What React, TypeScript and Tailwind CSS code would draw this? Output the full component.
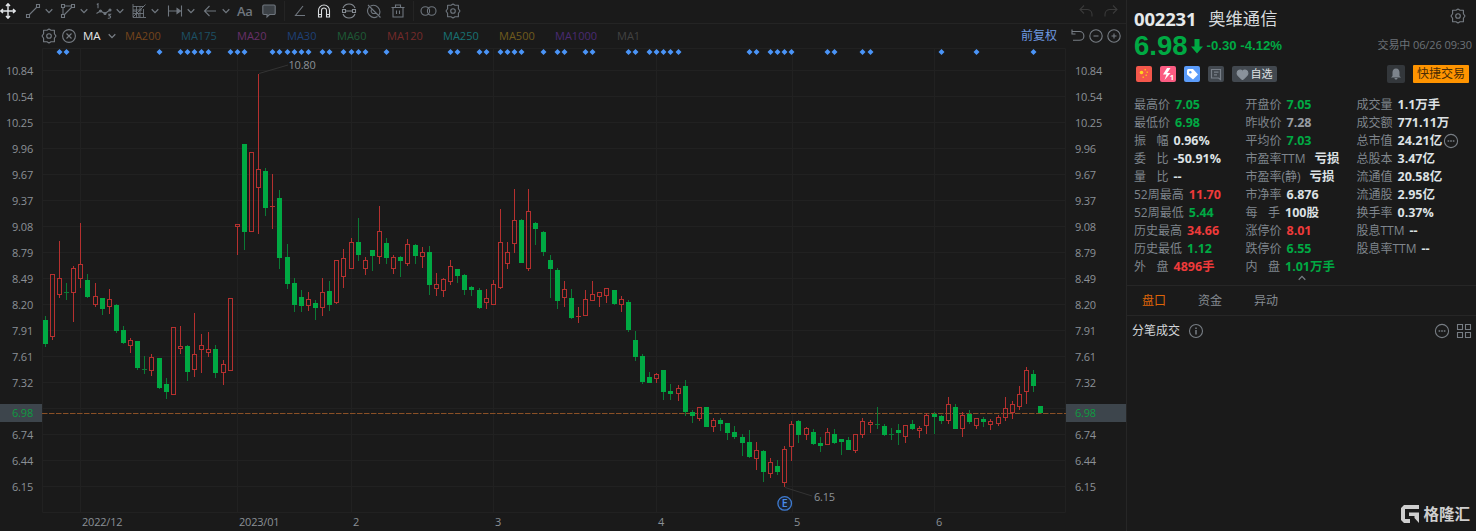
import React from "react";
import { Heart } from "lucide-react";

type Candle = [string, number, number, number, number];

// [direction, body top, body bottom, high, low] in chart pixels
const candles: Candle[] = [
  ["d", 320, 344, 316, 347], ["u", 274, 337, 274, 340], ["u", 278, 295, 241, 298], ["d", 292, 293, 283, 300],
  ["u", 268, 293, 266, 322], ["u", 264, 279, 223, 288], ["d", 280, 297, 274, 298], ["u", 296, 305, 283, 307],
  ["d", 298, 309, 298, 315], ["u", 299, 307, 289, 314], ["d", 305, 331, 304, 333], ["d", 330, 343, 326, 344],
  ["u", 340, 346, 338, 353], ["d", 341, 368, 341, 370], ["d", 369, 370, 356, 374], ["u", 357, 371, 354, 376],
  ["d", 358, 388, 358, 389], ["d", 384, 392, 378, 399], ["u", 327, 395, 327, 395], ["u", 346, 349, 326, 354],
  ["d", 346, 372, 345, 381], ["u", 354, 370, 313, 377], ["u", 345, 350, 334, 373], ["u", 349, 353, 332, 357],
  ["d", 349, 373, 345, 378], ["u", 364, 373, 360, 385], ["u", 298, 371, 298, 371], ["u", 224, 227, 224, 255],
  ["d", 144, 232, 144, 250], ["u", 152, 232, 152, 232], ["u", 169, 188, 74, 234], ["d", 171, 208, 168, 216],
  ["u", 206, 207, 174, 229], ["d", 198, 258, 190, 269], ["d", 257, 284, 244, 289], ["d", 283, 305, 278, 312],
  ["d", 297, 306, 290, 312], ["u", 299, 306, 292, 311], ["d", 303, 308, 300, 320], ["u", 292, 308, 278, 316],
  ["d", 291, 305, 281, 311], ["u", 260, 303, 260, 304], ["u", 258, 277, 249, 288], ["u", 242, 269, 238, 269],
  ["d", 242, 255, 218, 261], ["u", 260, 269, 257, 275], ["d", 250, 256, 250, 271], ["u", 231, 257, 206, 264],
  ["d", 243, 258, 238, 264], ["u", 257, 269, 255, 274], ["d", 257, 261, 256, 277], ["u", 244, 264, 239, 266],
  ["d", 245, 256, 244, 264], ["u", 252, 257, 247, 268], ["d", 252, 285, 246, 295], ["u", 284, 289, 273, 296],
  ["u", 279, 291, 278, 297], ["u", 266, 282, 260, 285], ["d", 269, 276, 269, 283], ["d", 275, 290, 274, 295],
  ["d", 287, 290, 286, 296], ["d", 290, 308, 288, 309], ["u", 298, 303, 289, 309], ["u", 284, 305, 280, 305],
  ["u", 242, 288, 209, 289], ["u", 252, 264, 242, 269], ["u", 220, 244, 189, 253], ["d", 220, 263, 219, 263],
  ["u", 211, 269, 189, 271], ["d", 223, 229, 222, 245], ["d", 232, 252, 231, 256], ["d", 260, 269, 255, 298],
  ["d", 270, 301, 268, 309], ["u", 289, 298, 281, 307], ["d", 298, 318, 289, 319], ["u", 316, 317, 307, 323],
  ["u", 299, 316, 290, 316], ["u", 294, 301, 281, 301], ["u", 292, 297, 292, 307], ["u", 288, 296, 288, 303],
  ["d", 290, 304, 290, 305], ["u", 299, 305, 296, 312], ["d", 302, 330, 300, 332], ["d", 340, 357, 331, 361],
  ["d", 356, 382, 354, 384], ["d", 377, 383, 372, 383], ["u", 374, 379, 373, 383], ["d", 370, 392, 370, 400],
  ["d", 391, 394, 384, 400], ["u", 388, 394, 385, 401], ["d", 386, 412, 380, 416], ["d", 412, 416, 410, 423],
  ["u", 407, 419, 407, 421], ["d", 407, 427, 407, 427], ["u", 420, 427, 418, 432], ["d", 420, 424, 418, 431],
  ["d", 423, 433, 423, 440], ["d", 432, 437, 426, 439], ["d", 437, 443, 434, 456], ["d", 442, 457, 430, 458],
  ["u", 450, 459, 442, 470], ["d", 451, 472, 450, 482], ["u", 462, 474, 458, 478], ["d", 466, 472, 460, 475],
  ["u", 449, 483, 446, 487], ["u", 424, 447, 421, 461], ["d", 421, 435, 420, 443], ["u", 428, 435, 427, 440],
  ["d", 432, 444, 429, 445], ["d", 443, 446, 437, 452], ["u", 432, 445, 428, 445], ["d", 434, 443, 429, 444],
  ["d", 439, 442, 439, 455], ["d", 440, 450, 437, 450], ["u", 434, 451, 434, 453], ["u", 421, 435, 418, 438],
  ["u", 422, 425, 420, 433], ["d", 424, 425, 407, 429], ["d", 426, 435, 424, 436], ["d", 434, 435, 428, 440],
  ["d", 430, 433, 424, 445], ["u", 425, 437, 425, 443], ["d", 424, 429, 420, 430], ["u", 428, 431, 426, 438],
  ["u", 415, 426, 413, 434], ["d", 414, 417, 412, 434], ["d", 416, 421, 415, 424], ["u", 404, 421, 397, 424],
  ["d", 407, 429, 404, 429], ["u", 415, 429, 412, 437], ["d", 414, 422, 410, 424], ["u", 418, 426, 418, 429],
  ["d", 419, 422, 417, 427], ["u", 421, 425, 419, 430], ["u", 417, 424, 415, 426], ["u", 408, 418, 397, 421],
  ["u", 404, 413, 401, 419], ["u", 394, 407, 386, 410], ["u", 370, 392, 367, 404], ["d", 374, 386, 370, 392],
  ["d", 406, 413, 406, 413],
];

// candles that carry an event marker
const events = [
  2, 3, 16, 19, 20, 21, 22, 23, 26, 27, 28, 32, 33, 34, 35, 36, 37, 39, 40, 42, 43, 44, 45, 48, 57, 58, 61, 62, 64,
  65, 66, 67, 70, 72, 73, 76, 77, 82, 83, 85, 86, 87, 88, 89, 99, 100, 102, 103, 104, 105, 110, 111, 115, 116, 126,
  131, 139,
];

const months = [
  { x: 80.5, text: "2022/12" },
  { x: 237.5, text: "2023/01" },
  { x: 351.5, text: "2" },
  { x: 493.5, text: "3" },
  { x: 656.5, text: "4" },
  { x: 792.5, text: "5" },
  { x: 934.5, text: "6" },
];

const prices = [
  "10.84", "10.54", "10.25", "9.96", "9.67", "9.37", "9.08", "8.79", "8.49",
  "8.20", "7.91", "7.61", "7.32", "6.98", "6.74", "6.44", "6.15",
];

const averages = [
  { text: "MA200", cls: "w-9 text-[#74441c]" },
  { text: "MA175", cls: "w-9 text-[#1c5064]" },
  { text: "MA20", cls: "w-[30px] text-[#683069]" },
  { text: "MA30", cls: "w-[30px] text-[#1e4077]" },
  { text: "MA60", cls: "w-[30px] text-[#1e5a37]" },
  { text: "MA120", cls: "w-9 text-[#752a2a]" },
  { text: "MA250", cls: "w-9 text-[#187274]" },
  { text: "MA500", cls: "w-9 text-[#705b1d]" },
  { text: "MA1000", cls: "w-[42px] text-[#4a2b73]" },
  { text: "MA1", cls: "w-6 text-[#424242]" },
];

const UP = "text-[#ef3a3a]";
const DOWN = "text-[#00a943]";
const PLAIN = "text-[#dde1e4]";
const MUTED = "text-[#979ca2]";

type Stat = { label: string; value: string; color: string; gap?: string; more?: boolean };

const stats: Stat[][] = [
  [
    { label: "最高价", value: "7.05", color: DOWN },
    { label: "最低价", value: "6.98", color: DOWN },
    { label: "振幅", value: "0.96%", color: PLAIN },
    { label: "委比", value: "-50.91%", color: PLAIN },
    { label: "量比", value: "--", color: PLAIN },
    { label: "52周最高", value: "11.70", color: UP },
    { label: "52周最低", value: "5.44", color: DOWN },
    { label: "历史最高", value: "34.66", color: UP },
    { label: "历史最低", value: "1.12", color: DOWN },
    { label: "外盘", value: "4896手", color: UP },
  ],
  [
    { label: "开盘价", value: "7.05", color: DOWN },
    { label: "昨收价", value: "7.28", color: MUTED },
    { label: "平均价", value: "7.03", color: DOWN },
    { label: "市盈率TTM", value: "亏损", color: PLAIN, gap: "gap-[9px]" },
    { label: "市盈率(静)", value: "亏损", color: PLAIN, gap: "gap-[9px]" },
    { label: "市净率", value: "6.876", color: PLAIN },
    { label: "每手", value: "100股", color: PLAIN },
    { label: "涨停价", value: "8.01", color: UP },
    { label: "跌停价", value: "6.55", color: DOWN },
    { label: "内盘", value: "1.01万手", color: DOWN },
  ],
  [
    { label: "成交量", value: "1.1万手", color: PLAIN },
    { label: "成交额", value: "771.11万", color: PLAIN },
    { label: "总市值", value: "24.21亿", color: PLAIN, more: true },
    { label: "总股本", value: "3.47亿", color: PLAIN },
    { label: "流通值", value: "20.58亿", color: PLAIN },
    { label: "流通股", value: "2.95亿", color: PLAIN },
    { label: "换手率", value: "0.37%", color: PLAIN },
    { label: "股息TTM", value: "--", color: PLAIN },
    { label: "股息率TTM", value: "--", color: PLAIN },
  ],
];

const Icon = ({ children, className = "" }: { children: React.ReactNode; className?: string }) => (
  <svg viewBox="0 0 16 16" className={`w-4 h-4 shrink-0 ${className}`} fill="none" stroke="currentColor" strokeWidth="1.1">
    {children}
  </svg>
);

const Caret = ({ className = "" }: { className?: string }) => (
  <svg viewBox="0 0 8 8" className={`w-2 h-2 shrink-0 ${className}`} fill="none" stroke="currentColor" strokeWidth="1.3">
    <path d="M.7 2.300 4 5.600l3.300-3.300" />
  </svg>
);

const GearIcon = ({ className = "" }: { className?: string }) => (
  <Icon className={className}>
    <path d="M6 2.2 8 1l2 1.2h3.4v3.5L15 8l-1.6 2.3v3.5H10L8 15l-2-1.2H2.6v-3.5L1 8l1.6-2.3V2.2z" strokeLinejoin="round" />
    <circle cx="8" cy="8" r="2.3" />
  </Icon>
);

const MoreIcon = ({ className = "" }: { className?: string }) => (
  <Icon className={className}>
    <circle cx="8" cy="8" r="6.6" />
    <path d="M4.6 8h1.6M7.2 8h1.6M9.8 8h1.6" strokeWidth="1.5" />
  </Icon>
);

const drawTools = [
  <Icon key="line"><path d="M4.5 11.5l7-7" /><path d="M1.5 11.5h3v3h-3zM11.5 1.5h3v3h-3z" /></Icon>,
  <Icon key="shape">
    <path d="M4.5 3h7M3 4.5v7M4.5 11.5l7-7" />
    <path d="M1.5 1.5h3v3h-3zM11.5 1.5h3v3h-3zM1.5 11.5h3v3h-3z" />
  </Icon>,
  <Icon key="wave">
    <path d="M.5 10.500 4.500 8l4.500 2.500L14 7" />
    <circle cx="4.500" cy="8" r="1" fill="currentColor" />
    <circle cx="9" cy="10.500" r="1" fill="currentColor" />
    <circle cx="14" cy="7" r="1" fill="currentColor" />
    <path d="M.8 1.500 2 .8v4.400M12 11.200h2.500L13 12.800c2.300 0 2 2.500 0 2.500h-1.200" />
  </Icon>,
  <Icon key="gann">
    <path d="M2 1v13.500h13M2 3.500h11M2 7h9M2 10.500h11M5.500 3v11M9 3v11M12.500 6v8M2 14 14.500 1.500M2 8c4 0 6 3 6 6" strokeWidth="0.9" />
  </Icon>,
  <Icon key="measure"><path d="M1.500 2.500v11M14.500 2.500v11M1.500 8h9.500" /><path d="M10 5.500 13.500 8 10 10.500z" fill="currentColor" /></Icon>,
  <Icon key="arrow"><path d="M14 8H2.500M7.500 3l-5 5 5 5" /></Icon>,
];

const Toolbar = () => (
  <div className="flex items-center justify-between h-6 pb-[2px] pr-[7px] border-b border-[#242424] text-[#6f767e]">
    <div className="flex items-center">
      <Icon className="mr-[9px] text-[#e4e7ea]">
        <path d="M8 1v14M1 8h14M6 3l2-2.200L10 3M6 13l2 2.200L10 13M3 6 .8 8 3 10M13 6l2.200 2L13 10" strokeWidth="1.4" />
      </Icon>
      <div className="flex items-center gap-[7.4px]">
        {drawTools.map((tool, i) => (
          <div key={i} className="flex items-center gap-1">
            {tool}
            <Caret />
          </div>
        ))}
      </div>
      <span className="w-[18px] ml-[7px] text-[13px] leading-4 font-semibold tracking-[-0.3px]">Aa</span>
      <Icon className="ml-[6px]">
        <path d="M3 2h10a1.200 1.200 0 0 1 1.200 1.200v7A1.200 1.200 0 0 1 13 11.500H8.500L6 14v-2.500H3a1.200 1.200 0 0 1-1.200-1.200V3.200A1.200 1.200 0 0 1 3 2z" fill="#3c4146" />
      </Icon>
      <span className="w-px h-5 ml-[7px] bg-[#242424]" />
      <Icon className="ml-[7px]"><path d="M11 3 3.500 12.500h9.500" /></Icon>
      <Icon className="ml-2 text-[#d9dcdf]">
        <path d="M2.500 14V7.500a5.500 5.500 0 0 1 11 0V14h-3V7.500a2.500 2.500 0 0 0-5 0V14zM2.500 11.500h3M10.500 11.500h3" />
      </Icon>
      <Icon className="ml-[9px] text-[#858b92]">
        <path d="M2 5a6.500 6.500 0 0 1 12 0M2 11a6.500 6.500 0 0 0 12 0M4.500 8h7" />
        <path d="M1.500 6.500h3v3h-3zM11.500 6.500h3v3h-3z" />
      </Icon>
      <Icon className="ml-[9px]">
        <path d="M4.500 3A6.500 6.500 0 0 1 13 12M11.500 13.500A6.500 6.500 0 0 1 3 4M2 2l12.500 12.500M6 6.200a2.500 2.500 0 0 0 3.600 3.600" />
      </Icon>
      <Icon className="ml-2">
        <path d="M1.500 4.500h13M5.500 4.200V2h5v2.200M3 4.500V14h10V4.500M6.500 7.500v3.500M9.500 7.500v3.500" />
      </Icon>
      <span className="w-px h-5 ml-[7px] bg-[#242424]" />
      <Icon className="ml-[6px] w-[17px]"><circle cx="4.800" cy="8" r="4.300" /><circle cx="11.200" cy="8" r="4.300" /></Icon>
      <GearIcon className="ml-2" />
    </div>
    <div className="flex gap-[9px] text-[#3a3a3a]">
      <Icon><path d="M6 2.500 2 6.500l4 4M2 6.500h7.500a5 5 0 0 1 4.500 5v2" /></Icon>
      <Icon><path d="m10 2.500 4 4-4 4M14 6.500H6.500a5 5 0 0 0-4.500 5v2" /></Icon>
    </div>
  </div>
);

const AverageBar = () => (
  <div className="flex items-center h-6 pl-[41px] pr-1 text-[11px] text-[#777d84]">
    <GearIcon />
    <Icon className="ml-1"><circle cx="8" cy="8" r="6.400" /><path d="m5.500 5.500 5 5M10.500 5.500l-5 5" /></Icon>
    <span className="w-[18px] ml-[6px] text-[11.500px] font-medium text-[#e6e6e6]">MA</span>
    <Caret className="ml-[7px] mr-[9px]" />
    <div className="flex gap-5">
      {averages.map((item) => (
        <span key={item.text} className={`whitespace-nowrap ${item.cls}`}>{item.text}</span>
      ))}
    </div>
    <span className="ml-auto mr-[13px] text-[12px] text-[#6f9ae3]">前复权</span>
    <Icon className="mr-[2px]"><path d="M2 3.500h7.500a4.300 4.300 0 0 1 0 8.800H3M5.500 6H2V1.500" /></Icon>
    <Icon className="mr-[2px]"><circle cx="8" cy="8" r="6.200" /><path d="M5.500 8h5" /></Icon>
    <Icon><circle cx="8" cy="8" r="6.200" /><path d="M5.500 8h5M8 5.500v5" /></Icon>
  </div>
);

const PriceAxis = ({ side }: { side: "left" | "right" }) => (
  <div className={`flex flex-col shrink-0 pt-[10px] text-[11px] tracking-[-0.2px] text-[#8b9096] ${side === "left" ? "w-[42px]" : "w-[60px]"}`}>
    {prices.map((price) => {
      const current = price === "6.98";
      return (
        <div
          key={price}
          className={`flex items-center ${side === "left" ? "justify-end pr-[9px]" : "pl-[9px]"} ${current ? "h-[18px] mt-2 bg-[#3d454c] text-[#0f9a41]" : "h-[26px]"}`}
        >
          {price}
        </div>
      );
    })}
  </div>
);

const Chart = () => (
  <svg viewBox="42 48 1024 483" className="w-[1024px] h-[483px] shrink-0">
    <g stroke="#212121" strokeWidth="1">
      {prices.map((price, i) => (
        <path key={price} d={`M42 ${70.5 + i * 26}H1066`} />
      ))}
      {months.map((m) => (
        <path key={m.x} d={`M${m.x} 48V512`} />
      ))}
      <path d="M42.5 48.5H1065.5V512.5H42.5z" fill="none" />
    </g>
    {events.map((i) => {
      const x = Math.floor(45.3 + i * 7.11) + 0.5;
      return <path key={i} d={`M${x} 49l3 3-3 3-3-3z`} fill="#4a94f7" />;
    })}
    <path d="M42 413.5H1066" stroke="#8a5026" strokeDasharray="5.5 1.5" />
    {candles.map(([dir, top, bottom, high, low], i) => {
      const x = Math.floor(45.3 + i * 7.11);
      const flat = bottom - top < 2;
      if (dir === "d") {
        return (
          <g key={i}>
            <rect x={x} y={high} width="1" height={low - high} fill="#0b7a35" />
            <rect x={x - 2} y={top} width="5" height={bottom - top} fill={flat ? "#0b7a35" : "#00a943"} />
          </g>
        );
      }
      return (
        <g key={i}>
          <path d={`M${x + 0.5} ${high}V${top}M${x + 0.5} ${bottom}V${low}`} stroke="#b5302f" />
          {flat ? (
            <rect x={x - 2} y={top} width="5" height="1" fill="#b5302f" />
          ) : (
            <rect x={x - 1.5} y={top + 0.5} width="4" height={bottom - top - 1} fill="none" stroke="#b5302f" />
          )}
        </g>
      );
    })}
    <path d="M259 73.5 288 65M785 487.5 812 496" stroke="#333333" fill="none" />
    <g fill="#8b9096" fontSize="11" letterSpacing="-0.2">
      <text x="288.5" y="68.5">10.80</text>
      <text x="814" y="500.5">6.15</text>
      {months.map((m) => (
        <text key={m.text} x={m.x + 1.5} y="526">{m.text}</text>
      ))}
    </g>
    <circle cx="784.7" cy="503.4" r="6.8" fill="#1a2330" stroke="#3f7bd0" strokeWidth="1.3" />
    <text x="784.7" y="507.2" fill="#4a8ceb" fontSize="10.5" fontWeight="600" textAnchor="middle">E</text>
  </svg>
);

const QuoteHeader = () => (
  <div className="pl-[7px] pr-[7px]">
    <div className="flex items-center h-[34px] pt-1">
      <span className="text-[18.5px] font-bold tracking-[-0.2px] text-[#e6e9eb]">002231</span>
      <span className="ml-3 text-[17.3px] text-[#d7dadd]">奥维通信</span>
      <GearIcon className="ml-auto mr-[3px] mb-[6px] text-[#777d84]" />
    </div>
    <div className="flex items-center h-[23px] text-[#00a943] font-[Liberation_Sans,sans-serif] font-bold">
      <span className="text-[27.5px] leading-6">6.98</span>
      <svg viewBox="0 0 12 16" className="w-3 h-4 ml-[3px] fill-current"><path d="M3.500 1h5v7.500H12L6 15.500 0 8.500h3.500z" /></svg>
      <span className="ml-1 text-[13.2px]">-0.30 -4.12%</span>
      <span className="ml-auto -mr-[3px] font-[Open_Sans,Noto_Sans_CJK_SC,sans-serif] font-normal text-[11px] tracking-[-0.1px] text-[#6c7278]">交易中 06/26 09:30</span>
    </div>
    <div className="flex items-center gap-2 h-[34px]">
      <svg viewBox="0 0 16 16" className="w-4 h-4 ml-[1.500px]">
        <rect width="16" height="16" rx="2" fill="#f4574b" />
        <circle cx="5.5" cy="6.5" r="1.8" fill="#ffd51e" />
        <path d="M8.500 3h1.500v1.500H8.500zM10.500 5.500H12V7h-1.500zM9.500 8.500H11V10H9.500zM6.500 10.500H8V12H6.500z" fill="#ffb31e" />
      </svg>
      <svg viewBox="0 0 16 16" className="w-4 h-4">
        <rect width="16" height="16" rx="2" fill="#fb5c82" />
        <path d="M7 2 3 8.500h3.500L4.500 14l6-7H7.200L10.500 2z" fill="#fff" />
        <text x="9.800" y="14" fontSize="7.500" fontWeight="700" fill="#fff">1</text>
      </svg>
      <svg viewBox="0 0 16 16" className="w-4 h-4">
        <rect width="16" height="16" rx="2" fill="#5b9cfa" />
        <path d="M3 4.500A1.500 1.500 0 0 1 4.500 3H9l5 5.500L9 13.500 3 8.500z" fill="#fff" />
        <circle cx="6.300" cy="6.200" r="1.200" fill="#5b9cfa" />
      </svg>
      <svg viewBox="0 0 16 16" className="w-4 h-4">
        <rect width="16" height="16" rx="2" fill="#42484f" />
        <path d="M3.500 3.500h9v10L10.500 12H3.500zM6 6.200h4.500M6 8.800h3" fill="none" stroke="#798089" strokeWidth="1.2" />
      </svg>
      <div className="flex items-center justify-center gap-[2px] w-[45px] h-4 rounded-[2px] bg-[#42484f] text-[11px] text-[#dfe2e5]">
        <Heart className="w-[13px] h-[13px] fill-[#8a929b] text-[#8a929b]" />
        自选
      </div>
      <div className="flex items-center justify-center w-[18px] h-[18px] ml-auto rounded-[2px] bg-[#33373b]">
        <svg viewBox="0 0 12 12" className="w-3 h-3 fill-[#7d848c]">
          <path d="M6 .5c2.500 0 3.500 2 3.500 4V8l1.500 1.500H1L2.500 8V4.500c0-2 1-4 3.500-4zM4.500 10h3c0 2-3 2-3 0z" />
        </svg>
      </div>
      <div className="flex items-center justify-center w-14 h-[18px] rounded-[1px] bg-[#ff9400] text-[12px] text-[#4a2c05]">快捷交易</div>
    </div>
  </div>
);

const StatRow = ({ label, value, color, gap = "gap-[5px]", more }: Stat) => (
  <div className={`flex items-center h-[18px] whitespace-nowrap ${gap}`}>
    {label.length === 2 ? (
      <span className="flex justify-between w-[34.5px] text-[#7f858c]">
        <span>{label[0]}</span>
        <span>{label[1]}</span>
      </span>
    ) : (
      <span className="text-[#7f858c]">{label}</span>
    )}
    <span className={`text-[12.5px] font-bold ${color}`}>{value}</span>
    {more && <MoreIcon className="-ml-[4px] text-[#777d84]" />}
  </div>
);

const QuotePanel = () => (
  <aside className="flex flex-col w-[350px] border-l border-[#262626]">
    <QuoteHeader />
    <div className="grid grid-cols-[111.5px_111px_120px] pl-[7px] pt-[5px] text-[12px]">
      {stats.map((column, i) => (
        <div key={i}>
          {column.map((item) => (
            <StatRow key={item.label} {...item} />
          ))}
        </div>
      ))}
    </div>
    <div className="flex justify-center h-[9px] text-[#777d84]">
      <Caret className="rotate-180 -mt-[2px]" />
    </div>
    <div className="flex items-center gap-8 h-[31px] pl-[15px] border-y border-[#262626] text-[12px] text-[#858b92]">
      <span className="text-[#dd6409]">盘口</span>
      <span>资金</span>
      <span>异动</span>
    </div>
    <div className="flex items-center h-[29px] pl-[5px] pr-1 text-[12px] text-[#777d84]">
      <span className="text-[#d3d6d9]">分笔成交</span>
      <Icon className="ml-2"><circle cx="8" cy="8" r="6.500" /><path d="M8 7v4.500M8 4.500V6" strokeWidth="1.5" /></Icon>
      <MoreIcon className="ml-auto mr-[6px]" />
      <Icon><path d="M1.500 1.500h5v5h-5zM9.500 1.500h5v5h-5zM1.500 9.500h5v5h-5zM9.500 9.500h5v5h-5z" /></Icon>
    </div>
    <div className="flex items-center justify-end gap-1 mt-auto pb-[6px] pr-[6px] text-[#cfcfcf]">
      <svg viewBox="0 0 18 18" className="w-[18px] h-[18px]">
        <path d="M3 0H18V4H4v10h5v4H3L0 15V3zM8 7.500H18V18L13.500 13V11H8z" fill="currentColor" />
      </svg>
      <span className="text-[15.5px] leading-[22px] font-bold">格隆汇</span>
    </div>
  </aside>
);

export default function App() {
  return (
    <div className="flex w-[1476px] h-[531px] overflow-hidden bg-[#1a1a1a] font-[Open_Sans,Noto_Sans_CJK_SC,sans-serif]">
      <main className="w-[1126px] shrink-0">
        <Toolbar />
        <AverageBar />
        <div className="flex">
          <PriceAxis side="left" />
          <Chart />
          <PriceAxis side="right" />
        </div>
      </main>
      <QuotePanel />
    </div>
  );
}
